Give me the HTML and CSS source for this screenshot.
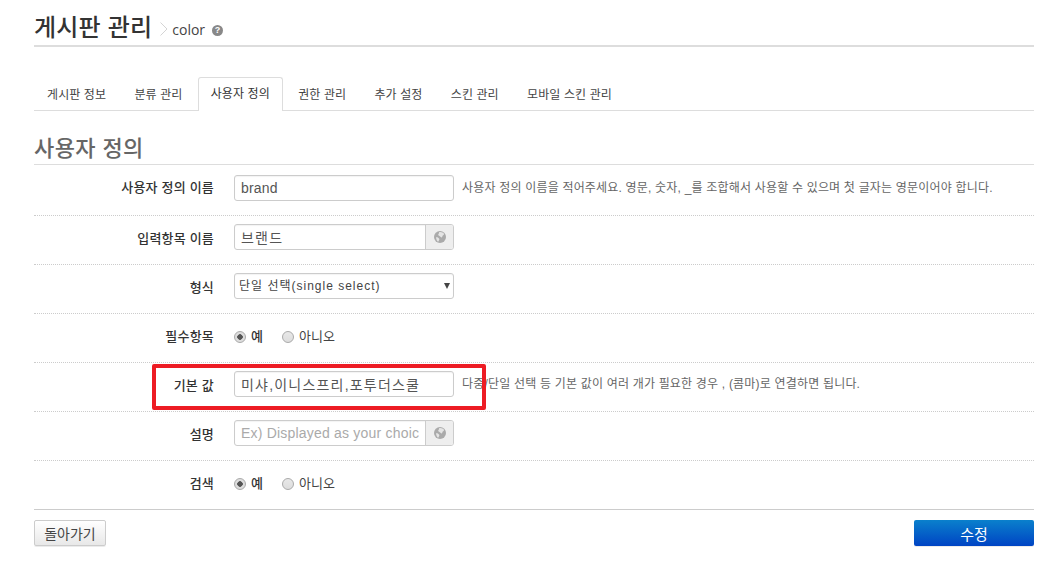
FILE: index.html
```html
<!DOCTYPE html>
<html lang="ko">
<head>
<meta charset="utf-8">
<title>게시판 관리</title>
<link rel="stylesheet" href="styles.css">
</head>
<body>
<main class="page">
  <header class="title-bar">
    <h1 class="title">게시판 관리</h1>
    <svg class="crumb-sep" viewBox="0 0 8 14"><path d="M.5.5 7 7 .5 13.500" fill="none" stroke="#d4d4d4"/></svg>
    <span class="crumb">color</span>
    <span class="help">?</span>
  </header>
  <nav class="tabs">
    <a class="tab">게시판 정보</a>
    <a class="tab">분류 관리</a>
    <a class="tab active">사용자 정의</a>
    <a class="tab">권한 관리</a>
    <a class="tab">추가 설정</a>
    <a class="tab">스킨 관리</a>
    <a class="tab">모바일 스킨 관리</a>
  </nav>
  <h2 class="section">사용자 정의</h2>
  <form class="form">
    <div class="row">
      <label class="label">사용자 정의 이름</label>
      <input class="field" type="text" value="brand">
      <p class="hint">사용자 정의 이름을 적어주세요. 영문, 숫자, _를 조합해서 사용할 수 있으며 첫 글자는 영문이어야 합니다.</p>
    </div>
    <div class="row">
      <label class="label">입력항목 이름</label>
      <div class="lang-field">
        <input class="field-inner ko" type="text" value="브랜드">
        <span class="lang-btn"><svg class="globe" viewBox="0 0 12 12"><circle cx="6" cy="6" r="6" fill="#aaa"/><path d="M5 1.2c2-.6 4 .2 5 1.600.3 1-.6 1.200-1.200 1.800-.7.7-.2 1.600-1 1.800-.9.2-1.300-.8-2-1.200C5 4.700 4 4.500 4.300 3.300 4.500 2.500 5.400 2.200 5 1.200zM2 6.500c1-.4 2.200.2 3 1 .7.7.2 1.400-.1 2-.2.5-.4 1-.9 1.200C3 9.800 2.200 8.200 2 6.500z" fill="#e4e4e4"/></svg></span>
      </div>
    </div>
    <div class="row">
      <label class="label">형식</label>
      <div class="select-wrap">
        <select class="select"><option>단일 선택(single select)</option></select>
      </div>
    </div>
    <div class="row">
      <label class="label">필수항목</label>
      <div class="radios">
        <label class="radio strong"><input type="radio" name="req" checked>예</label>
        <label class="radio"><input type="radio" name="req">아니오</label>
      </div>
    </div>
    <div class="row">
      <label class="label">기본 값</label>
      <input class="field ko" type="text" value="미샤,이니스프리,포투더스쿨">
      <p class="hint">다중/단일 선택 등 기본 값이 여러 개가 필요한 경우 , (콤마)로 연결하면 됩니다.</p>
    </div>
    <div class="row">
      <label class="label">설명</label>
      <div class="lang-field">
        <input class="field-inner" type="text" placeholder="Ex) Displayed as your choice">
        <span class="lang-btn"><svg class="globe" viewBox="0 0 12 12"><circle cx="6" cy="6" r="6" fill="#aaa"/><path d="M5 1.2c2-.6 4 .2 5 1.600.3 1-.6 1.200-1.200 1.800-.7.7-.2 1.600-1 1.800-.9.2-1.300-.8-2-1.200C5 4.700 4 4.500 4.300 3.300 4.500 2.500 5.400 2.200 5 1.200zM2 6.500c1-.4 2.200.2 3 1 .7.7.2 1.400-.1 2-.2.5-.4 1-.9 1.200C3 9.800 2.200 8.200 2 6.500z" fill="#e4e4e4"/></svg></span>
      </div>
    </div>
    <div class="row last">
      <label class="label">검색</label>
      <div class="radios">
        <label class="radio strong"><input type="radio" name="search" checked>예</label>
        <label class="radio"><input type="radio" name="search">아니오</label>
      </div>
    </div>
    <div class="actions">
      <button class="btn" type="button">돌아가기</button>
      <button class="btn primary" type="button">수정</button>
    </div>
  </form>
  <div class="highlight"></div>
</main>
</body>
</html>
```
FILE: styles.css
```css
* { box-sizing: border-box; }
html, body { margin: 0; padding: 0; background: #fff; }
body {
  font-family: "Liberation Sans", "Noto Sans CJK KR", sans-serif;
  font-size: 12px;
  color: #333;
  height: 570px;
  overflow: hidden;
}
.page { position: relative; width: 1000px; margin-left: 34px; padding-top: 9px; }

.title-bar {
  display: flex;
  align-items: center;
  height: 38px;
  border-bottom: 2px solid #ddd;
}
.title { margin: 2px 0 0; font-size: 24px; font-weight: 500; line-height: 36px; letter-spacing: .2px; color: #333; }
.crumb-sep { width: 8px; height: 14px; margin: 3px 4px 0 8px; }
.crumb { font-family: "Open Sans", sans-serif; font-size: 14px; margin-top: 5px; color: #444; }
.help {
  width: 11px; height: 11px; margin: 7px 0 0 7px;
  border-radius: 50%; background: #888; color: #fff;
  font-size: 9px; font-weight: 700; line-height: 11px; text-align: center;
}

.tabs {
  display: flex;
  height: 34px;
  margin-top: 30px;
  border-bottom: 1px solid #ddd;
  align-items: flex-end;
}
.tab {
  display: block;
  height: 33px;
  padding: 0 12px;
  margin: 0 2.300px -1px 0;
  line-height: 33px;
  letter-spacing: .1px;
  border: 1px solid transparent;
  border-bottom: 0;
  color: #444;
  white-space: nowrap;
}
.tab.active {
  height: 34px;
  background: #fff;
  border-color: #ddd;
  border-radius: 3px 3px 0 0;
  color: #333;
}

.section {
  margin: 20px 0 0;
  padding-top: 2px;
  font-size: 22px;
  font-weight: 500;
  line-height: 32px;
  height: 34px;
  letter-spacing: .4px;
  color: #666;
  border-bottom: 1px solid #ddd;
}

.row {
  display: flex;
  align-items: flex-start;
  height: 49px;
  padding-top: 8px;
  border-bottom: 1px dotted #ccc;
}
.row:first-child { height: 51px; padding-top: 10px; }
.row.last { border-bottom: 1px solid #ccc; }
.label {
  flex: 0 0 180px;
  margin-right: 20px;
  text-align: right;
  font-size: 13px;
  line-height: 29px;
  letter-spacing: .2px;
  font-weight: 500;
  color: #333;
}
.row:first-child .label { line-height: 26px; }
.field, .lang-field, .select-wrap {
  flex: 0 0 220px;
  width: 220px;
  height: 26px;
  border: 1px solid #ccc;
  border-radius: 3px;
  background: #fff;
  box-shadow: inset 0 1px 1px rgba(0,0,0,.05);
}
.field, .field-inner {
  padding: 0 6px;
  font-family: "Liberation Sans", "Noto Sans CJK KR", sans-serif;
  font-size: 14px;
  letter-spacing: .2px;
  color: #555;
  outline: 0;
}
.field.ko, .field-inner.ko { letter-spacing: 1.200px; }
.lang-field { display: flex; overflow: hidden; }
.field-inner { flex: 1; min-width: 0; border: 0; background: transparent; height: 100%; }
.field-inner::placeholder { color: #aaa; opacity: 1; }
.lang-btn {
  flex: 0 0 28px;
  display: flex; align-items: center; justify-content: center;
  background: #eee;
  border-left: 1px solid #ccc;
}
.globe { width: 12px; height: 12px; }
.select-wrap { position: relative; }
.select-wrap::after {
  content: "";
  position: absolute; right: 3px; top: 9px;
  border: 3px solid transparent;
  border-top: 6px solid #444;
  border-bottom: 0;
}
.select {
  appearance: none;
  width: 100%; height: 100%;
  border: 0; background: transparent;
  padding: 0 2px 0 4px;
  font-family: "Liberation Sans", "Noto Sans CJK KR", sans-serif;
  font-size: 12px;
  letter-spacing: 1px;
  color: #444;
  outline: 0;
}
.hint { margin: 0 0 0 8px; font-size: 12px; line-height: 26px; letter-spacing: .19px; color: #666; white-space: nowrap; }
.radios { display: flex; gap: 19px; margin-top: 2px; line-height: 26px; }
.radio { display: flex; align-items: center; font-size: 13px; color: #444; }
.radio.strong { font-weight: 500; color: #333; }
.radio input {
  appearance: none;
  width: 12px; height: 12px;
  margin: 0 5px 0 0;
  border: 1px solid #aaa;
  border-radius: 50%;
  background: linear-gradient(#e8e8e8, #ddd);
}
.radio input:checked { background: radial-gradient(circle, #555 0 2.500px, #ddd 3px); }

.actions { display: flex; justify-content: space-between; padding-top: 10px; }
.btn {
  width: 72px;
  height: 26px;
  padding: 0;
  border: 1px solid #ccc;
  border-radius: 2px;
  background: linear-gradient(#fff, #e8e8e8);
  box-shadow: 0 1px 0 rgba(0,0,0,.08);
  font-family: "Liberation Sans", "Noto Sans CJK KR", sans-serif;
  font-size: 14px;
  color: #444;
}
.btn.primary {
  width: 120px;
  border: 0;
  background: linear-gradient(#0a80cc, #0044c4);
  color: #fff;
  font-size: 15px;
}

.highlight {
  position: absolute;
  left: 118px; top: 364px;
  width: 334px; height: 46px;
  border: 4px solid #ed1c24;
  border-radius: 2px;
  pointer-events: none;
}
```
